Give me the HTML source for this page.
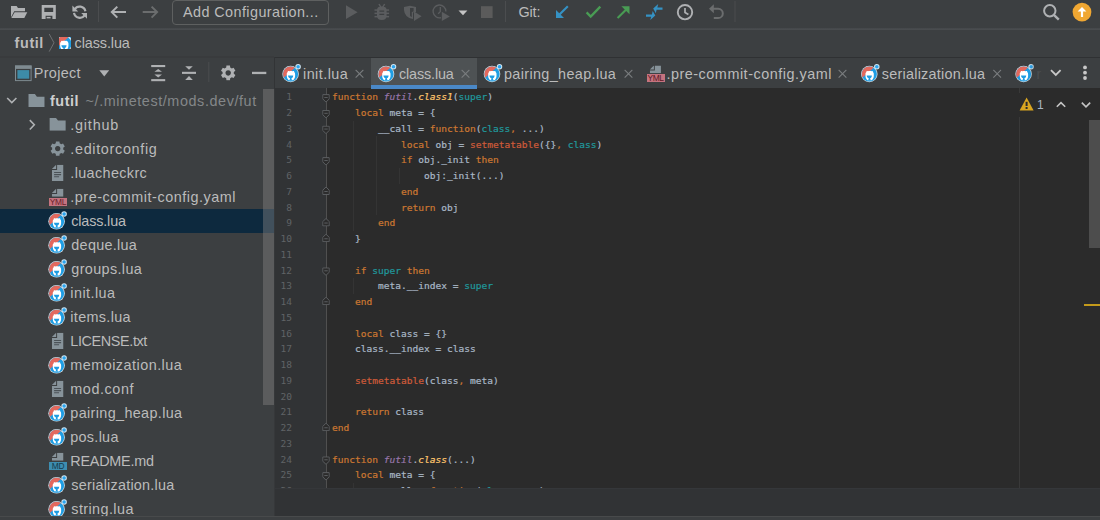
<!DOCTYPE html>
<html lang="en">
<head>
<meta charset="utf-8">
<title>futil - class.lua</title>
<style>
*{box-sizing:border-box;margin:0;padding:0}
html,body{width:1100px;height:520px;overflow:hidden;background:#3c3f41}
body{position:relative;font-family:"Liberation Sans","DejaVu Sans",sans-serif;color:#bbbbbb;font-size:14.4px}
.abs{position:absolute}
svg{position:absolute;overflow:visible}
#tbline{left:0;top:28px;width:1100px;height:2px;background:linear-gradient(#44474a,#4b4e50)}
#navline{left:0;top:57px;width:1100px;height:1px;background:#2f3133}
#navline2{left:0;top:56px;width:274px;height:2px;background:#393b3d}
.t{position:absolute;white-space:nowrap;line-height:20px;color:#bbbbbb}
#cfg{left:172px;top:0;width:157px;height:25px;border:1px solid #5e6060;border-radius:4px}
#proj{left:0;top:58px;width:274px;height:458px;background:#3c3f41;overflow:hidden}
#divider{left:274px;top:57px;width:1px;height:32px;background:#323436}
#divider2{left:274px;top:89px;width:1px;height:427px;background:#36383a}
#tree{position:absolute;left:0;top:-58px;width:274px;height:600px}
.row{position:absolute;left:0;width:274px;height:24px}
.sel{background:#0d293e}
.lab{position:absolute;width:17.5px;height:8px;font-size:8.4px;line-height:8.6px;text-align:center;letter-spacing:-0.35px;overflow:hidden}
#pscroll{left:263px;top:89px;width:11px;height:316px;background:rgba(128,128,128,.45)}
#tabs{left:275px;top:58px;width:825px;height:30px;background:#3c3f41}
#tabact{left:370.5px;top:58px;width:106.8px;height:30px;background:#4e5254}
#tabul{left:370.5px;top:85px;width:106.8px;height:4px;background:#4a88c7;z-index:3}
#ed{left:275px;top:88px;width:825px;height:400px;background:#2b2b2b;overflow:hidden}
#gutter{position:absolute;left:0;top:0;width:50.5px;height:400px;background:#313335}
#gline{position:absolute;left:50.5px;top:0;width:1px;height:400px;background:#505050}
#code,#nums{position:absolute;font-family:"DejaVu Sans Mono","Liberation Mono",monospace;font-size:9.56px;line-height:15.75px;white-space:pre;color:#a9b7c6}
#code{-webkit-text-stroke:0.2px}
#code{left:57px;top:1.3px}
#nums{left:0;top:1.3px;width:17px;text-align:right;color:#606366}
.k{color:#cc7832}.g{color:#9876aa;font-style:italic}.f{color:#ffc66d;font-style:italic}.p{color:#20999d}.b{color:#cf5b3a}
.ig{position:absolute;width:1px;background:#343434}
#margin{left:1019px;top:88px;width:1px;height:400px;background:#393939}
#insp{left:1012px;top:93px;width:84px;height:24px;background:#2b2b2b}
#escroll{left:1089px;top:120px;width:11px;height:128px;background:#4d4d4d}
#mark{left:1083.5px;top:303.7px;width:17px;height:2.5px;background:#c49a1b}
#bottom{left:275px;top:488px;width:825px;height:28px;background:#313335;border-top:1px solid #35373a}
#status{left:0;top:516px;width:1100px;height:4px;background:#3c3f41;border-top:1px solid #484a4b}
</style>
</head>
<body>

<svg width="0" height="0" style="left:0;top:0">
<defs>
<symbol id="lua" viewBox="0 0 20 20">
  <clipPath id="lc"><circle cx="9" cy="10.4" r="7.55"/></clipPath>
  <circle cx="9" cy="10.4" r="8.3" fill="#cdd9df"/>
  <g clip-path="url(#lc)">
    <rect x="0" y="0" width="20" height="20" fill="#1e9de3"/>
    <path d="M23 -4.6 L-7.6 23 L-8 -8 Z" fill="#e3695d"/>
  </g>
  <path d="M5.2 11.2 C5 9.6 5.5 8.7 6.1 8.3 C5.9 7.4 6.9 7 7.6 7.6 C8.6 7.2 10.1 7.2 11.1 7.6 C11.8 7 12.8 7.4 12.6 8.3 C13.2 8.7 13.7 9.6 13.5 11.2 C13.7 13.2 13.2 15.4 11.6 16.6 L7.1 16.6 C5.5 15.4 5 13.2 5.2 11.2 Z" fill="#ffffff"/>
  <path d="M6.4 11.9 H11.6 C11.6 13.6 10.6 14.4 9.9 14.7 V15.6 L10.9 16.6 H7.4 L8.4 15.6 V14.7 C7.7 14.4 6.4 13.6 6.4 11.9 Z" fill="#1e9de3"/>
  <circle cx="16.5" cy="3.2" r="2.75" fill="#cfe6f3"/>
  <circle cx="16.5" cy="3.2" r="1.75" fill="#2aa4ee"/>
</symbol>
<symbol id="folder" viewBox="0 0 16.4 12.8">
  <path d="M0 0 H6.6 L8.6 2.6 H16.4 V12.8 H0 Z" fill="#87939a"/>
</symbol>
<symbol id="gear" viewBox="-8 -8 16 16">
  <path fill="currentColor" fill-rule="evenodd" d="M-2.04 -5.43 L-1.83 -7.48 L1.83 -7.48 L2.04 -5.43 A5.8 5.8 0 0 1 3.68 -4.48 L5.56 -5.32 L7.39 -2.15 L5.72 -0.94 A5.8 5.8 0 0 1 5.72 0.94 L7.39 2.15 L5.56 5.32 L3.68 4.48 A5.8 5.8 0 0 1 2.04 5.43 L1.83 7.48 L-1.83 7.48 L-2.04 5.43 A5.8 5.8 0 0 1 -3.68 4.48 L-5.56 5.32 L-7.39 2.15 L-5.72 0.94 A5.8 5.8 0 0 1 -5.72 -0.94 L-7.39 -2.15 L-5.56 -5.32 L-3.68 -4.48 A5.8 5.8 0 0 1 -2.04 -5.43 Z M0 -2.8 A2.8 2.8 0 1 0 0.001 -2.8 Z"/>
</symbol>
<symbol id="file" viewBox="0 0 11.6 16.2">
  <path d="M5.2 0 H11.6 V16.2 H0 V5.2 H5.2 Z" fill="#87939a"/>
  <path d="M0 4.2 L4.2 0 V4.2 Z" fill="#87939a"/>
  <path d="M2.2 7.8 H9.2 M2.2 9.9 H9.2 M2.2 12 H7.2" stroke="#4b5257" stroke-width="1.1" fill="none"/>
</symbol>
<symbol id="fhalf" viewBox="0 0 11.6 8">
  <path d="M5.2 0 H11.6 V8 H0 V5.2 H5.2 Z" fill="#87939a"/>
  <path d="M0 4.2 L4.2 0 V4.2 Z" fill="#87939a"/>
</symbol>
<symbol id="xx" viewBox="0 0 10 10">
  <path d="M0.7 0.7 L9.3 9.3 M9.3 0.7 L0.7 9.3" stroke="#7a7d7f" stroke-width="1.2" fill="none"/>
</symbol>
<symbol id="fold" viewBox="0 0 8 9">
  <path d="M0.5 0.5 H7.5 V5 L4 8.5 L0.5 5 Z" fill="#2b2b2b" stroke="#606366" stroke-width="1"/>
  <path d="M2.2 3.6 H5.8" stroke="#606366" stroke-width="1"/>
</symbol>
<symbol id="foldend" viewBox="0 0 8 9">
  <path d="M0.5 8.5 H7.5 V4 L4 0.5 L0.5 4 Z" fill="#2b2b2b" stroke="#606366" stroke-width="1"/>
  <path d="M2.2 5.4 H5.8" stroke="#606366" stroke-width="1"/>
</symbol>
</defs>
</svg>

<div id="tbline" class="abs"></div>
<div id="navline" class="abs"></div>
<div id="navline2" class="abs"></div>

<svg id="tbicons" width="1100" height="30" viewBox="0 0 1100 30" style="left:0;top:0">
  <g fill="#afb1b3">
    <path d="M11 6 H16.6 L18 8 H25 V11.3 H14.2 L11 17.2 Z"/>
    <path d="M14.6 12.2 H27.3 L24.3 18 H11.4 Z"/>
  </g>
  <path fill="#afb1b3" fill-rule="evenodd" d="M41.7 5 H55.8 V19.1 H41.7 Z M44.3 7.8 V11.9 H53.2 V7.8 Z M45.6 15.8 V19.1 H52.4 V15.8 Z"/>
  <rect x="46.6" y="16.9" width="4" height="1.5" fill="#afb1b3"/>
  <g fill="none" stroke="#afb1b3" stroke-width="2.2">
    <path d="M74.6 9.4 A5.9 5.9 0 0 1 85.4 11.2"/>
    <path d="M84.8 15 A5.9 5.9 0 0 1 74 12.9"/>
  </g>
  <path fill="#afb1b3" d="M72.4 5.6 V11.4 H78.2 Z M87 18.7 V12.9 H81.2 Z"/>
  <rect x="98" y="1" width="1" height="21" fill="#4b4d4f"/>
  <g fill="none" stroke-width="2" stroke-linejoin="miter">
    <path d="M126 12.1 H112.4 M117.3 6.6 L111.8 12.1 L117.3 17.6" stroke="#afb1b3"/>
    <path d="M142.7 12.1 H156.3 M151.6 6.6 L157.1 12.1 L151.6 17.6" stroke="#6b6d6e"/>
  </g>
  <path d="M346 5.3 V19.1 L357.6 12.2 Z" fill="#5b5d5f"/>
  <g fill="#5b5d5f">
    <path d="M377 10 Q377 6.6 381.8 6.6 Q386.6 6.6 386.6 10 V15.5 Q386.6 20 381.8 20 Q377 20 377 15.5 Z"/>
    <path d="M378.3 4.3 L379.6 3.7 L381.6 7 L380.3 7.6 Z M385.3 4.3 L384 3.7 L382 7 L383.3 7.6 Z"/>
    <rect x="374.5" y="9.3" width="14.6" height="1.5"/>
    <rect x="374.5" y="12.6" width="14.6" height="1.5"/>
    <rect x="374.5" y="15.9" width="14.6" height="1.5"/>
  </g>
  <path d="M379.4 11.2 H384.2 M379.4 14.4 H384.2" stroke="#3c3f41" stroke-width="1.2"/>
  <path d="M404 7 L410 5.8 L416 7 V12 L413 12.5 V19 Q404.5 17.5 404 10 Z" fill="#5b5d5f"/>
  <path d="M410 8 H413.6 V11.4 L411.8 12 V17 Q410.4 16.6 410 15.5 Z" fill="#3c3f41"/>
  <path d="M414 11.6 V21 L421.6 16.3 Z" fill="#5b5d5f"/>
  <path d="M441 17.6 A6.4 6.4 0 1 1 445.9 11.4" fill="none" stroke="#5b5d5f" stroke-width="1.3"/>
  <path d="M440.3 7 V11.6 L438.2 13.8" fill="none" stroke="#5b5d5f" stroke-width="1.3"/>
  <path d="M441.8 11.8 V21 L449.8 16.4 Z" fill="#5b5d5f"/>
  <path d="M458.5 10.5 H467.4 L463 15.3 Z" fill="#c4c4c4"/>
  <rect x="481" y="6.2" width="11.6" height="11.8" fill="#5b5b5b"/>
  <rect x="505" y="1" width="1" height="21" fill="#4b4d4f"/>
  <path d="M567.8 6.2 L559 15" stroke="#3592c4" stroke-width="2.1" fill="none"/>
  <path d="M556 10 V18 H564 Z" fill="#3592c4"/>
  <path d="M586.6 12.4 L590.7 16.6 L600.3 6.6" stroke="#499c54" stroke-width="2.3" fill="none"/>
  <path d="M617.6 18 L626.5 9.2" stroke="#499c54" stroke-width="2.1" fill="none"/>
  <path d="M621.4 6.2 H629.5 V14.2 Z" fill="#499c54"/>
  <g fill="#3592c4">
    <path d="M653.2 8.6 L658.2 4 L657.4 7.4 H662.5 V9.8 H656.6 L655.8 13.2 Z"/>
    <path d="M655.3 15.6 L650.3 20 L651.1 16.8 H646 V14.4 H651.9 L652.7 11 Z"/>
  </g>
  <circle cx="685" cy="12.2" r="7.2" fill="none" stroke="#afb1b3" stroke-width="1.9"/>
  <path d="M685 8 V12.6 L688.4 14.6" fill="none" stroke="#afb1b3" stroke-width="1.7"/>
  <path d="M713 8.8 H718.2 A4.6 4.6 0 0 1 718.2 18 H713.8" fill="none" stroke="#6b6d6e" stroke-width="2"/>
  <path d="M709 8.8 L713.8 4.2 V13.2 Z" fill="#6b6d6e"/>
  <rect x="734.5" y="1" width="1" height="21" fill="#4b4d4f"/>
  <circle cx="1049.8" cy="10.7" r="5.7" fill="none" stroke="#afb1b3" stroke-width="2"/>
  <path d="M1053.8 14.8 L1058.8 19.6" stroke="#afb1b3" stroke-width="2.4"/>
  <circle cx="1082" cy="12.1" r="9.4" fill="#f0a732"/>
  <path d="M1082 17 V9.4" stroke="#ffffff" stroke-width="2.2"/>
  <path d="M1077.6 11.6 L1082 7 L1086.4 11.6 Z" fill="#ffffff"/>
</svg>

<div id="cfg" class="abs"></div>
<div class="t" style="left:183.00px;top:2.4px;letter-spacing:0.421px;">Add Configuration...</div>
<div class="t" style="left:518.60px;top:2.4px;letter-spacing:-0.200px;">Git:</div>
<div class="t" style="left:14.60px;top:33.2px;font-weight:bold;letter-spacing:0.600px;">futil</div>

<svg width="9" height="21" viewBox="0 0 9 21" style="left:48px;top:33px"><g transform="translate(0.000 0.000) scale(1.00000 1.00000) translate(-0.000 -0.000)"><path d="M1.2 1 L6 9.8 L1.2 18.6" fill="none" stroke="#6e7072" stroke-width="1"/></g></svg>
<svg width="12.3" height="12.2" viewBox="4.05 3.65 12.3 12.2" style="left:58.8px;top:36.85px;overflow:hidden"><use href="#lua" width="20" height="20"/></svg>

<div class="t" style="left:74.60px;top:33.2px;letter-spacing:-0.100px;">class.lua</div>
<div id="proj" class="abs">
<div id="tree">
<div class="row" style="top:89px"><svg width="13" height="10" viewBox="0 0 13 10" style="left:6px;top:7px"><g transform="translate(0.000 0.800) scale(1.00000 1.00000) translate(-0.000 -0.000)"><path d="M1.2 1.2 L5.8 5.8 L10.4 1.2" fill="none" stroke="#afb1b3" stroke-width="1.6"/></g></svg><svg width="18" height="14" viewBox="0 0 18 14" style="left:28px;top:5px"><g transform="translate(0.300 0.100) scale(1.00000 1.00000) translate(0.000 0.000)"><use href="#folder" width="16.4" height="12.8"/></g></svg><div class="t" style="left:50.00px;top:2.2px;font-weight:bold;letter-spacing:0.550px;color:#cfcfcf;">futil</div><div class="t" style="left:85.60px;top:2.2px;letter-spacing:0.583px;color:#848789;">~/.minetest/mods.dev/fut</div></div>
<div class="row" style="top:113px"><svg width="10" height="14" viewBox="0 0 10 14" style="left:28px;top:5px"><g transform="translate(0.600 0.900) scale(1.00000 1.00000) translate(-0.000 -0.000)"><path d="M1.2 1.2 L5.7 5.9 L1.2 10.6" fill="none" stroke="#afb1b3" stroke-width="1.6"/></g></svg><svg width="18" height="14" viewBox="0 0 18 14" style="left:49px;top:5px"><g transform="translate(0.400 0.000) scale(1.00000 1.00000) translate(0.000 0.000)"><use href="#folder" width="16.4" height="12.8"/></g></svg><div class="t" style="left:70.30px;top:2.2px;letter-spacing:0.783px;">.github</div></div>
<div class="row" style="top:137px"><svg width="17" height="18" viewBox="0 0 17 18" style="left:50px;top:3px;color:#87939a"><g transform="translate(0.000 0.900) scale(1.00000 1.00000) translate(0.000 0.000)"><use href="#gear" width="15.4" height="15.4"/></g></svg><div class="t" style="left:70.30px;top:2.2px;letter-spacing:0.675px;">.editorconfig</div></div>
<div class="row" style="top:161px"><svg width="14" height="18" viewBox="0 0 14 18" style="left:51px;top:3px"><g transform="translate(0.900 0.700) scale(1.00000 1.00000) translate(0.000 0.000)"><use href="#file" width="11.6" height="16.2"/></g></svg><div class="t" style="left:70.30px;top:2.2px;letter-spacing:0.370px;">.luacheckrc</div></div>
<div class="row" style="top:185px"><svg width="14" height="10" viewBox="0 0 14 10" style="left:51px;top:3px"><g transform="translate(0.900 0.700) scale(1.00000 1.00000) translate(0.000 0.000)"><use href="#fhalf" width="11.6" height="8"/></g></svg><div class="lab" style="left:49.2px;top:12.8px;background:#c5737f;color:#6b1f2a">YML</div><div class="t" style="left:70.30px;top:2.2px;letter-spacing:0.532px;">.pre-commit-config.yaml</div></div>
<div class="row sel" style="top:209px"><svg width="22" height="22" viewBox="0 0 22 22" style="left:47px;top:1px"><g transform="translate(0.600 0.900) scale(1.00000 1.00000) translate(0.000 0.000)"><use href="#lua" width="20" height="20"/></g></svg><div class="t" style="left:71.30px;top:2.2px;letter-spacing:-0.162px;">class.lua</div></div>
<div class="row" style="top:233px"><svg width="22" height="22" viewBox="0 0 22 22" style="left:47px;top:1px"><g transform="translate(0.600 0.900) scale(1.00000 1.00000) translate(0.000 0.000)"><use href="#lua" width="20" height="20"/></g></svg><div class="t" style="left:71.30px;top:2.2px;letter-spacing:0.287px;">deque.lua</div></div>
<div class="row" style="top:257px"><svg width="22" height="22" viewBox="0 0 22 22" style="left:47px;top:1px"><g transform="translate(0.600 0.900) scale(1.00000 1.00000) translate(0.000 0.000)"><use href="#lua" width="20" height="20"/></g></svg><div class="t" style="left:71.30px;top:2.2px;letter-spacing:0.367px;">groups.lua</div></div>
<div class="row" style="top:281px"><svg width="22" height="22" viewBox="0 0 22 22" style="left:47px;top:1px"><g transform="translate(0.600 0.900) scale(1.00000 1.00000) translate(0.000 0.000)"><use href="#lua" width="20" height="20"/></g></svg><div class="t" style="left:70.30px;top:2.2px;letter-spacing:0.443px;">init.lua</div></div>
<div class="row" style="top:305px"><svg width="22" height="22" viewBox="0 0 22 22" style="left:47px;top:1px"><g transform="translate(0.600 0.900) scale(1.00000 1.00000) translate(0.000 0.000)"><use href="#lua" width="20" height="20"/></g></svg><div class="t" style="left:70.30px;top:2.2px;letter-spacing:0.338px;">items.lua</div></div>
<div class="row" style="top:329px"><svg width="14" height="18" viewBox="0 0 14 18" style="left:51px;top:3px"><g transform="translate(0.900 0.700) scale(1.00000 1.00000) translate(0.000 0.000)"><use href="#file" width="11.6" height="16.2"/></g></svg><div class="t" style="left:70.30px;top:2.2px;letter-spacing:-0.370px;">LICENSE.txt</div></div>
<div class="row" style="top:353px"><svg width="22" height="22" viewBox="0 0 22 22" style="left:47px;top:1px"><g transform="translate(0.600 0.900) scale(1.00000 1.00000) translate(0.000 0.000)"><use href="#lua" width="20" height="20"/></g></svg><div class="t" style="left:70.30px;top:2.2px;letter-spacing:0.479px;">memoization.lua</div></div>
<div class="row" style="top:377px"><svg width="14" height="18" viewBox="0 0 14 18" style="left:51px;top:3px"><g transform="translate(0.900 0.700) scale(1.00000 1.00000) translate(0.000 0.000)"><use href="#file" width="11.6" height="16.2"/></g></svg><div class="t" style="left:70.30px;top:2.2px;letter-spacing:0.571px;">mod.conf</div></div>
<div class="row" style="top:401px"><svg width="22" height="22" viewBox="0 0 22 22" style="left:47px;top:1px"><g transform="translate(0.600 0.900) scale(1.00000 1.00000) translate(0.000 0.000)"><use href="#lua" width="20" height="20"/></g></svg><div class="t" style="left:70.30px;top:2.2px;letter-spacing:0.360px;">pairing_heap.lua</div></div>
<div class="row" style="top:425px"><svg width="22" height="22" viewBox="0 0 22 22" style="left:47px;top:1px"><g transform="translate(0.600 0.900) scale(1.00000 1.00000) translate(0.000 0.000)"><use href="#lua" width="20" height="20"/></g></svg><div class="t" style="left:70.30px;top:2.2px;letter-spacing:0.283px;">pos.lua</div></div>
<div class="row" style="top:449px"><svg width="14" height="10" viewBox="0 0 14 10" style="left:51px;top:3px"><g transform="translate(0.900 0.700) scale(1.00000 1.00000) translate(0.000 0.000)"><use href="#fhalf" width="11.6" height="8"/></g></svg><div class="lab" style="left:49.2px;top:12.8px;background:#3d8db0;color:#153a4c">MD</div><div class="t" style="left:70.30px;top:2.2px;letter-spacing:-0.237px;">README.md</div></div>
<div class="row" style="top:473px"><svg width="22" height="22" viewBox="0 0 22 22" style="left:47px;top:1px"><g transform="translate(0.600 0.900) scale(1.00000 1.00000) translate(0.000 0.000)"><use href="#lua" width="20" height="20"/></g></svg><div class="t" style="left:71.30px;top:2.2px;letter-spacing:0.231px;">serialization.lua</div></div>
<div class="row" style="top:497px"><svg width="22" height="22" viewBox="0 0 22 22" style="left:47px;top:1px"><g transform="translate(0.600 0.900) scale(1.00000 1.00000) translate(0.000 0.000)"><use href="#lua" width="20" height="20"/></g></svg><div class="t" style="left:71.30px;top:2.2px;letter-spacing:0.411px;">string.lua</div></div>
</div>
</div>

<svg width="18" height="18" viewBox="0 0 18 18" style="left:15px;top:65px"><g transform="translate(0.000 0.500) scale(1.00000 1.00000) translate(-0.000 -0.000)">
  <rect x="0.5" y="0.5" width="15.6" height="14.6" fill="#3c3f41" stroke="#7f8b91" stroke-width="1"/>
  <rect x="0" y="0" width="16.6" height="3.4" fill="#7f8b91"/>
  <rect x="2.4" y="4.6" width="11.8" height="8.6" fill="#3d8ba8"/>
</g></svg>
<svg width="280" height="31" viewBox="0 58 280 31" style="left:0;top:58px">
  <path d="M99.3 70.3 H109.2 L104.25 76.5 Z" fill="#afb1b3"/>
  <g fill="#afb1b3">
    <rect x="151.2" y="65" width="14" height="2.1"/>
    <rect x="151.2" y="79.1" width="14" height="2.1"/>
    <path d="M158.2 68.9 L162 71.8 H154.4 Z M158.2 77.4 L162 74.4 H154.4 Z"/>
    <rect x="182" y="71.8" width="14" height="2.1"/>
    <path d="M189 69.8 L192.8 66.2 H185.2 Z M189 76.1 L192.8 79.9 H185.2 Z"/>
    <rect x="252" y="71.8" width="14.3" height="2.3"/>
  </g>
  <rect x="208.3" y="62" width="1" height="20" fill="#4b4d4f"/>
</svg>
<svg width="18" height="17" viewBox="0 0 18 17" style="left:220px;top:65px;color:#afb1b3"><g transform="translate(0.400 0.100) scale(1.00000 1.00000) translate(0.000 0.000)"><use href="#gear" width="15.6" height="15.6"/></g></svg>

<div class="t" style="left:33.80px;top:63.4px;letter-spacing:0.333px;">Project</div>
<div id="divider" class="abs"></div>
<div id="divider2" class="abs"></div>
<div id="tabs" class="abs"></div>
<div id="tabact" class="abs"></div>
<div id="tabul" class="abs"></div>
<svg width="22" height="22" viewBox="0 0 22 22" style="left:281px;top:63px"><g transform="translate(0.600 0.600) scale(1.00000 1.00000) translate(0.000 0.000)"><use href="#lua" width="20" height="20"/></g></svg><div class="t" style="left:303.00px;top:64px;letter-spacing:0.457px;">init.lua</div><svg width="10" height="11" viewBox="0 0 10 11" style="left:355px;top:69px"><g transform="translate(0.000 0.200) scale(1.00000 1.00000) translate(0.000 0.000)"><use href="#xx" width="9" height="9"/></g></svg><svg width="21" height="22" viewBox="0 0 21 22" style="left:377px;top:63px"><g transform="translate(0.000 0.600) scale(1.00000 1.00000) translate(0.000 0.000)"><use href="#lua" width="20" height="20"/></g></svg><div class="t" style="left:399.00px;top:64px;letter-spacing:-0.150px;">class.lua</div><svg width="10" height="11" viewBox="0 0 10 11" style="left:461px;top:69px"><g transform="translate(0.000 0.200) scale(1.00000 1.00000) translate(0.000 0.000)"><use href="#xx" width="9" height="9"/></g></svg><svg width="21" height="22" viewBox="0 0 21 22" style="left:483px;top:63px"><g transform="translate(0.000 0.600) scale(1.00000 1.00000) translate(0.000 0.000)"><use href="#lua" width="20" height="20"/></g></svg><div class="t" style="left:504.00px;top:64px;letter-spacing:0.360px;">pairing_heap.lua</div><svg width="10" height="11" viewBox="0 0 10 11" style="left:624px;top:69px"><g transform="translate(0.000 0.200) scale(1.00000 1.00000) translate(0.000 0.000)"><use href="#xx" width="9" height="9"/></g></svg><svg width="14" height="10" viewBox="0 0 14 10" style="left:649px;top:65px"><g transform="translate(0.600 0.600) scale(1.00000 1.00000) translate(0.000 0.000)"><use href="#fhalf" width="11.6" height="7.6"/></g></svg><div class="lab" style="left:646.6px;top:74.2px;width:18px;height:8.2px;background:#c5737f;color:#5b1824">YML</div><div class="t" style="left:666.40px;top:64px;letter-spacing:0.527px;">.pre-commit-config.yaml</div><svg width="10" height="11" viewBox="0 0 10 11" style="left:838px;top:69px"><g transform="translate(0.000 0.200) scale(1.00000 1.00000) translate(0.000 0.000)"><use href="#xx" width="9" height="9"/></g></svg><svg width="22" height="22" viewBox="0 0 22 22" style="left:860px;top:63px"><g transform="translate(0.300 0.600) scale(1.00000 1.00000) translate(0.000 0.000)"><use href="#lua" width="20" height="20"/></g></svg><div class="t" style="left:881.80px;top:64px;letter-spacing:0.244px;">serialization.lua</div><svg width="11" height="11" viewBox="0 0 11 11" style="left:992px;top:69px"><g transform="translate(0.700 0.200) scale(1.00000 1.00000) translate(0.000 0.000)"><use href="#xx" width="9" height="9"/></g></svg><svg width="22" height="22" viewBox="0 0 22 22" style="left:1014px;top:63px"><g transform="translate(0.600 0.600) scale(1.00000 1.00000) translate(0.000 0.000)"><use href="#lua" width="20" height="20"/></g></svg><div class="t" style="left:1036.5px;top:64px;color:#5a5d5f">r</div><div class="abs" style="left:1030px;top:59px;width:16px;height:27px;background:linear-gradient(90deg,rgba(60,63,65,0),#3c3f41)"></div><svg width="13" height="9" viewBox="0 0 13 9" style="left:1050px;top:69px"><g transform="translate(0.000 0.000) scale(1.00000 1.00000) translate(-0.000 -0.000)"><path d="M1 1.2 L5.8 6 L10.6 1.2" fill="none" stroke="#c8c8c8" stroke-width="1.8"/></g></svg><svg width="5" height="17" viewBox="0 0 5 17" style="left:1083px;top:65px"><g transform="translate(0.000 0.400) scale(1.00000 1.00000) translate(-0.000 -0.000)"><circle cx="2" cy="2" r="1.9" fill="#c8c8c8"/><circle cx="2" cy="7.3" r="1.9" fill="#c8c8c8"/><circle cx="2" cy="12.6" r="1.9" fill="#c8c8c8"/></g></svg>
<div id="ed" class="abs">
<div id="gutter"></div>
<div id="gline"></div>
<div class="ig" style="left:78.0px;top:32.5px;height:110.2px"></div><div class="ig" style="left:101.0px;top:48.2px;height:78.8px"></div><div class="ig" style="left:124.1px;top:79.8px;height:15.8px"></div><div class="ig" style="left:78.0px;top:190.0px;height:15.8px"></div><div class="ig" style="left:78.0px;top:394.8px;height:15.8px"></div>
<svg width="9" height="10" viewBox="0 0 9 10" style="left:47px;top:6px"><g transform="translate(0.250 0.100) scale(1.00000 1.00000) translate(0.000 0.000)"><use href="#fold" width="7.5" height="8.6"/></g></svg><svg width="9" height="11" viewBox="0 0 9 11" style="left:47px;top:21px"><g transform="translate(0.250 0.850) scale(1.00000 1.00000) translate(0.000 0.000)"><use href="#fold" width="7.5" height="8.6"/></g></svg><svg width="9" height="11" viewBox="0 0 9 11" style="left:47px;top:37px"><g transform="translate(0.250 0.600) scale(1.00000 1.00000) translate(0.000 0.000)"><use href="#fold" width="7.5" height="8.6"/></g></svg><svg width="9" height="10" viewBox="0 0 9 10" style="left:47px;top:69px"><g transform="translate(0.250 0.100) scale(1.00000 1.00000) translate(0.000 0.000)"><use href="#fold" width="7.5" height="8.6"/></g></svg><svg width="9" height="11" viewBox="0 0 9 11" style="left:47px;top:98px"><g transform="translate(0.250 0.400) scale(1.00000 1.00000) translate(0.000 0.000)"><use href="#foldend" width="7.5" height="8.6"/></g></svg><svg width="9" height="11" viewBox="0 0 9 11" style="left:47px;top:129px"><g transform="translate(0.250 0.900) scale(1.00000 1.00000) translate(0.000 0.000)"><use href="#foldend" width="7.5" height="8.6"/></g></svg><svg width="9" height="11" viewBox="0 0 9 11" style="left:47px;top:145px"><g transform="translate(0.250 0.650) scale(1.00000 1.00000) translate(0.000 0.000)"><use href="#foldend" width="7.5" height="8.6"/></g></svg><svg width="9" height="10" viewBox="0 0 9 10" style="left:47px;top:179px"><g transform="translate(0.250 0.350) scale(1.00000 1.00000) translate(0.000 0.000)"><use href="#fold" width="7.5" height="8.6"/></g></svg><svg width="9" height="11" viewBox="0 0 9 11" style="left:47px;top:208px"><g transform="translate(0.250 0.650) scale(1.00000 1.00000) translate(0.000 0.000)"><use href="#foldend" width="7.5" height="8.6"/></g></svg><svg width="9" height="11" viewBox="0 0 9 11" style="left:47px;top:334px"><g transform="translate(0.250 0.650) scale(1.00000 1.00000) translate(0.000 0.000)"><use href="#foldend" width="7.5" height="8.6"/></g></svg><svg width="9" height="10" viewBox="0 0 9 10" style="left:47px;top:368px"><g transform="translate(0.250 0.350) scale(1.00000 1.00000) translate(0.000 0.000)"><use href="#fold" width="7.5" height="8.6"/></g></svg><svg width="9" height="10" viewBox="0 0 9 10" style="left:47px;top:384px"><g transform="translate(0.250 0.100) scale(1.00000 1.00000) translate(0.000 0.000)"><use href="#fold" width="7.5" height="8.6"/></g></svg>
<div id="nums">1
2
3
4
5
6
7
8
9
10
11
12
13
14
15
16
17
18
19
20
21
22
23
24
25
26</div>
<div id="code"><span class="k">function</span> <span class="g">futil</span>.<span class="f">class1</span>(<span class="p">super</span>)
    <span class="k">local</span> meta = {
        __call = <span class="k">function</span>(<span class="p">class</span><span class="k">,</span> ...)
            <span class="k">local</span> obj = <span class="b">setmetatable</span>({}<span class="k">,</span> <span class="p">class</span>)
            <span class="k">if</span> obj._init <span class="k">then</span>
                obj:_init(...)
            <span class="k">end</span>
            <span class="k">return</span> obj
        <span class="k">end</span>
    }

    <span class="k">if</span> <span class="p">super</span> <span class="k">then</span>
        meta.__index = <span class="p">super</span>
    <span class="k">end</span>

    <span class="k">local</span> class = {}
    class.__index = class

    <span class="b">setmetatable</span>(class<span class="k">,</span> meta)

    <span class="k">return</span> class
<span class="k">end</span>

<span class="k">function</span> <span class="g">futil</span>.<span class="f">class</span>(...)
    <span class="k">local</span> meta = {
        __call = <span class="k">function</span>(<span class="p">class</span><span class="k">,</span> ...)</div>
</div>
<div id="margin" class="abs"></div>
<div id="insp" class="abs"></div>
<svg width="16" height="15" viewBox="0 0 16 15" style="left:1019px;top:97px"><g transform="translate(0.600 0.400) scale(1.00000 1.00000) translate(-0.000 -0.000)"><path d="M7 0 L14 13 H0 Z" fill="#d9a520"/><rect x="6" y="4.4" width="2" height="4.2" fill="#2b2b2b"/><rect x="6" y="9.6" width="2" height="2" fill="#2b2b2b"/></g></svg>
<div class="t" style="left:1037px;top:95px;font-size:12px;color:#a9b7c6">1</div>
<svg width="11" height="8" viewBox="0 0 11 8" style="left:1056px;top:101px"><g transform="translate(0.000 0.400) scale(1.00000 1.00000) translate(-0.000 -0.000)"><path d="M0.8 5.4 L5 1.2 L9.2 5.4" fill="none" stroke="#c4c4c4" stroke-width="1.6"/></g></svg>
<svg width="11" height="8" viewBox="0 0 11 8" style="left:1081px;top:101px"><g transform="translate(0.000 0.800) scale(1.00000 1.00000) translate(-0.000 -0.000)"><path d="M0.8 0.8 L5 5 L9.2 0.8" fill="none" stroke="#c4c4c4" stroke-width="1.6"/></g></svg>
<div id="escroll" class="abs"></div>
<div id="mark" class="abs"></div>
<div id="pscroll" class="abs"></div>
<div id="bottom" class="abs"></div>
<div id="status" class="abs"></div>
</body>
</html>
